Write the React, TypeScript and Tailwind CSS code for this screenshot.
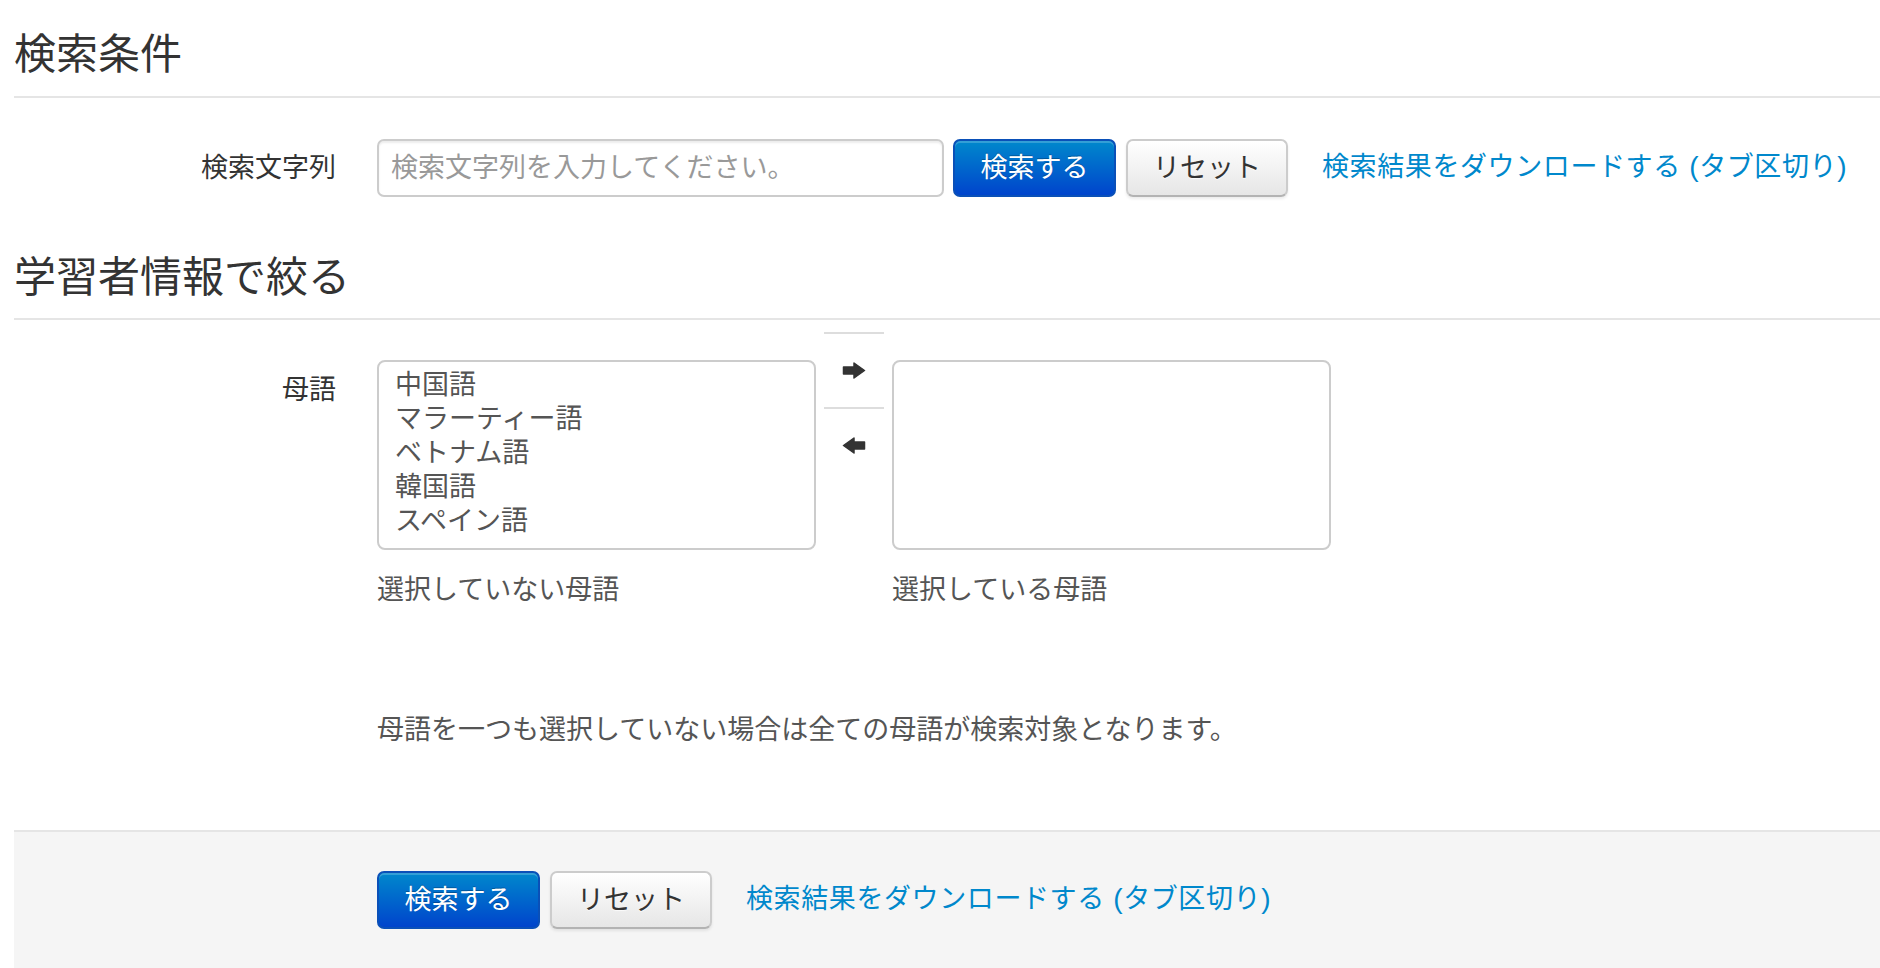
import React from "react";

const ArrowRight = () => (
  <svg width="24" height="17" viewBox="0 0 24 17">
    <path d="M1.5 5 H12 V1 L22.5 8.5 L12 16 V12 H1.5 Z" fill="#333" strokeLinejoin="round" stroke="#333" strokeWidth="1.5" />
  </svg>
);
const ArrowLeft = () => (
  <svg width="24" height="17" viewBox="0 0 24 17">
    <path d="M22.5 5 H12 V1 L1.5 8.5 L12 16 V12 H22.5 Z" fill="#333" strokeLinejoin="round" stroke="#333" strokeWidth="1.5" />
  </svg>
);

const PrimaryBtn = () => (
  <button className="h-[58px] w-[163px] rounded-[7px] border-2 border-[#0a50b8] bg-[linear-gradient(to_bottom,#0088cc,#0044cc)] text-[27px] leading-none text-white [text-shadow:0_-1px_0_rgba(0,0,0,0.25)] shadow-[inset_0_2px_0_rgba(255,255,255,0.2)]">
    検索する
  </button>
);
const ResetBtn = () => (
  <button className="h-[58px] w-[162px] rounded-[7px] border-2 border-[#cccccc] border-b-[#b3b3b3] bg-[linear-gradient(to_bottom,#ffffff,#e6e6e6)] text-[27px] leading-none text-[#333] [text-shadow:0_1px_1px_rgba(255,255,255,0.75)] shadow-[0_2px_3px_rgba(0,0,0,0.08)]">
    リセット
  </button>
);
const DownloadLink = () => (
  <a className="text-[27px] leading-none tracking-[0.6px] text-[#0088cc] cursor-pointer">
    検索結果をダウンロードする<span className="text-[28px]"> (</span>タブ区切り<span className="text-[28px]">)</span>
  </a>
);

export default function App() {
  const langs = ["中国語", "マラーティー語", "ベトナム語", "韓国語", "スペイン語"];
  return (
    <div className="min-h-[968px] bg-white pl-[14px] font-['Liberation_Sans','Noto_Sans_CJK_JP',sans-serif] text-[#333]">
      <h2 className="pt-[30px] pb-[16px] border-b-2 border-[#e5e5e5] text-[42px] leading-[50px] font-normal">検索条件</h2>

      <div className="mt-[41px] flex items-center">
        <label className="w-[322px] text-right text-[27px] leading-[58px]">検索文字列</label>
        <div className="ml-[41px] flex items-center">
          <input
            className="h-[58px] w-[567px] rounded-[7px] border-2 border-[#cccccc] px-[12px] text-[27px] text-[#555] outline-none placeholder:text-[#999] shadow-[inset_0_2px_2px_rgba(0,0,0,0.075)]"
            placeholder="検索文字列を入力してください。"
          />
          <div className="ml-[9px]"><PrimaryBtn /></div>
          <div className="ml-[10px]"><ResetBtn /></div>
          <div className="ml-[34px]"><DownloadLink /></div>
        </div>
      </div>

      <h2 className="mt-[56px] pb-[15px] border-b-2 border-[#e5e5e5] text-[42px] leading-[50px] font-normal">学習者情報で絞る</h2>

      <div className="mt-[12px] flex items-start">
        <label className="w-[322px] pt-[41px] text-right text-[27px] leading-[34px]">母語</label>
        <div className="ml-[41px]">
          <div className="flex items-start">
            <div>
              <div className="mt-[28px] h-[190px] w-[439px] rounded-[8px] border-2 border-[#cccccc] px-[16px] pt-[6px] text-[27px] leading-[34px] text-[#555]">
                {langs.map((l) => (
                  <div key={l}>{l}</div>
                ))}
              </div>
              <div className="mt-[23px] text-[27px] leading-[34px] text-[#555]">選択していない母語</div>
            </div>
            <div className="mx-[8px] w-[60px]">
              <div className="flex h-[75px] items-center justify-center border-t-2 border-[#dddddd]">
                <ArrowRight />
              </div>
              <div className="flex h-[75px] items-center justify-center border-t-2 border-[#dddddd]">
                <ArrowLeft />
              </div>
            </div>
            <div>
              <div className="mt-[28px] h-[190px] w-[439px] rounded-[8px] border-2 border-[#cccccc]"></div>
              <div className="mt-[23px] text-[27px] leading-[34px] text-[#555]">選択している母語</div>
            </div>
          </div>
          <p className="mt-[106px] text-[27px] leading-[34px] text-[#555]">母語を一つも選択していない場合は全ての母語が検索対象となります。</p>
        </div>
      </div>

      <div className="mt-[83px] border-t-2 border-[#e5e5e5] bg-[#f5f5f5] pt-[39px] pb-[40px] pl-[363px]">
        <div className="flex items-center">
          <PrimaryBtn />
          <div className="ml-[10px]"><ResetBtn /></div>
          <div className="ml-[34px]"><DownloadLink /></div>
        </div>
      </div>
    </div>
  );
}
